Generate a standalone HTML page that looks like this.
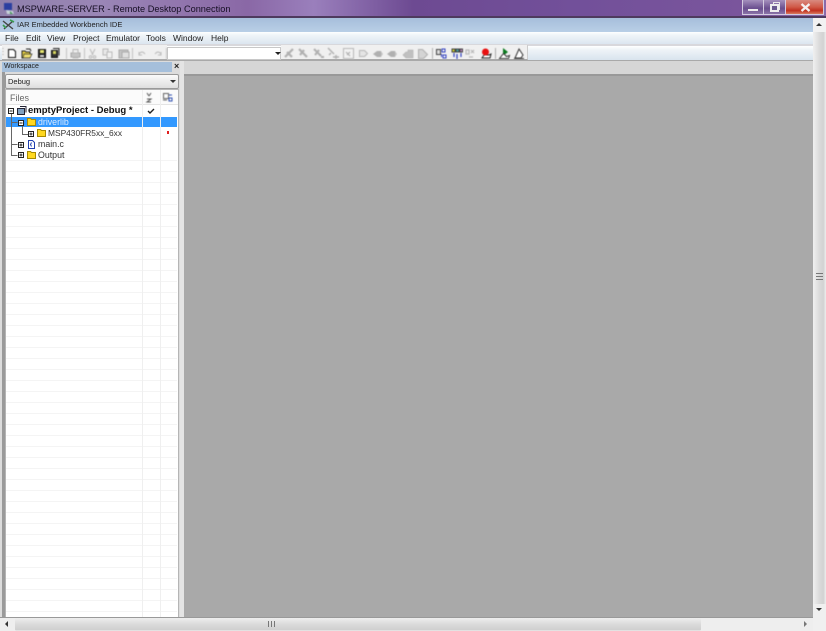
<!DOCTYPE html>
<html><head><meta charset="utf-8"><style>
html,body{margin:0;padding:0;width:826px;height:631px;overflow:hidden;background:#fff}
body{position:relative;font-family:"Liberation Sans",sans-serif}
div,span,svg{position:absolute;box-sizing:border-box}
.t{white-space:nowrap;color:#222;filter:blur(.35px)}
.m{top:33px;font-size:8.5px;line-height:11px;color:#222;white-space:nowrap;filter:blur(.35px)}
.r{left:6px;width:171px;height:1px;background:#f4f4f4}
</style></head><body>
<!-- title bar -->
<div style="left:0;top:0;width:826px;height:17px;background:linear-gradient(90deg,#8f80ab 0,#9a86b6 12%,#8a68a6 30%,#9a7fbc 38%,#6d4a92 50%,#72509a 70%,#7a559c 90%,#8a6aa8 100%)"></div>
<div style="left:0;top:16px;width:826px;height:2px;background:#4e3a5e"></div>
<svg style="left:3px;top:2px;filter:blur(.4px)" width="12" height="13" viewBox="0 0 12 13"><path d="M1 1h8v7H1z" fill="#2b3fa0"/><path d="M3 8l7 1 1 3H4z" fill="#c6d0d8"/><path d="M7 9l3 3H7z" fill="#4a9a5a"/></svg>
<div class="t" style="left:17px;top:3px;font-size:9.2px;line-height:12px;color:#160f24">MSPWARE-SERVER - Remote Desktop Connection</div>
<!-- window buttons -->
<div style="left:742px;top:0;width:22px;height:15px;border:1px solid #d4cbe0;border-top:0;background:linear-gradient(#a490bd,#6a4e8e 60%,#8a74a8)"></div>
<div style="left:764px;top:0;width:22px;height:15px;border:1px solid #d4cbe0;border-top:0;border-left:0;background:linear-gradient(#a490bd,#6a4e8e 60%,#8a74a8)"></div>
<div style="left:786px;top:0;width:38px;height:15px;border:1px solid #d4cbe0;border-top:0;border-left:0;background:linear-gradient(#d98a80,#d05a48 50%,#c03020 75%,#d87a60)"></div>
<div style="left:748px;top:9px;width:10px;height:2px;background:#eee"></div>
<div style="left:773px;top:2px;width:7px;height:8px;border:1px solid #e8e8e8"></div>
<div style="left:770px;top:4px;width:9px;height:8px;border:2px solid #eee;background:#6a5a90"></div>
<svg style="left:800px;top:3px" width="11" height="9" viewBox="0 0 11 9"><path d="M1.500 1l8 7M9.500 1l-8 7" stroke="#f4f0f0" stroke-width="2.400"/></svg>
<!-- IDE title -->
<div style="left:0;top:18px;width:813px;height:14px;background:linear-gradient(#a6bedb,#b9cfe6)"></div>
<svg style="left:2px;top:19px;filter:blur(.3px)" width="13" height="12" viewBox="0 0 13 12"><path d="M1 2l10 8M2 10l9-8" stroke="#444" stroke-width="1.400"/><path d="M8 1l4 2M1 6l3 3" stroke="#3a9a50" stroke-width="1.600"/></svg>
<div class="t" style="left:17px;top:19px;font-size:7.5px;line-height:12px">IAR Embedded Workbench IDE</div>
<!-- menu -->
<div style="left:0;top:32px;width:813px;height:13px;background:linear-gradient(#fff 0,#f0f5f9 3px,#d9e4ee 100%)"></div>
<div class="m" style="left:5px">File</div>
<div class="m" style="left:26px">Edit</div>
<div class="m" style="left:47px">View</div>
<div class="m" style="left:73px">Project</div>
<div class="m" style="left:106px">Emulator</div>
<div class="m" style="left:146px">Tools</div>
<div class="m" style="left:173px">Window</div>
<div class="m" style="left:211px">Help</div>
<!-- toolbar band -->
<div style="left:0;top:44px;width:813px;height:2px;background:#d8d8dc"></div>
<div style="left:0;top:46px;width:813px;height:14px;background:linear-gradient(#fff,#eef3f7 4px,#d9e4ee)"></div>
<div style="left:0;top:60px;width:813px;height:1px;background:#a9a9a9"></div>
<div style="left:2px;top:45px;width:165px;height:15px;background:#f0f0f0;border-bottom:1px solid #aaa"></div>
<div style="left:167px;top:47px;width:114px;height:13px;background:#fff;border:1px solid #c8c8c8"></div>
<div style="left:275px;top:52px;width:0;height:0;border:3px solid transparent;border-top:3px solid #222"></div>
<div style="left:281px;top:45px;width:247px;height:15px;background:#f0f0f0;border-bottom:1px solid #aaa;border-right:1px solid #ccc"></div>
<!-- toolbar icons left -->
<svg style="left:0;top:45px;filter:blur(.4px)" width="170" height="15" viewBox="0 0 170 15" fill="none">
<path d="M3 3v1M3 6v1M3 9v1" stroke="#aaa"/>
<path d="M8.500 4.500h5l2 2v6h-7z" fill="#fff" stroke="#111"/>
<path d="M22 6h3l1 1h4v6h-8z" fill="#e8d040" stroke="#222"/><path d="M26 4h4l1 2" stroke="#222"/><path d="M24 9h8l-2 4h-7z" fill="#f0e070" stroke="#333" stroke-width=".7"/>
<path d="M38.500 4.500h7v8h-7z" fill="#222" stroke="#111"/><path d="M40 5h4v3h-4z" fill="#e8e870"/><path d="M40 10h4v2h-4z" fill="#ddd"/>
<path d="M53 3.500h6v7" stroke="#222"/><path d="M51.500 5.500h6v7h-6z" fill="#333" stroke="#111"/><path d="M53 6h3v3h-3z" fill="#d8d860"/>
<path d="M66.500 3v11" stroke="#c4c4c4"/>
<path d="M71 8h9v4h-9z" fill="#c4c4c4" stroke="#aaa"/><path d="M73 4.500h5V8h-5zM73 12h5v1h-5z" fill="#eee" stroke="#b8b8b8"/>
<path d="M84.500 3v11" stroke="#c4c4c4"/>
<path d="M90 4l3 6M95 4l-3 6" stroke="#bbb"/><circle cx="90.500" cy="12" r="1.300" stroke="#bbb"/><circle cx="94.500" cy="12" r="1.300" stroke="#bbb"/>
<path d="M103 4h5v6h-5z" fill="#e8e8e8" stroke="#bbb"/><path d="M107 7h5v6h-5z" fill="#f0f0f0" stroke="#bbb"/>
<path d="M119 5h9v8h-9z" fill="#c4c4c4" stroke="#aaa"/><path d="M122 7h7v6h-7z" fill="#e0e0e0" stroke="#aaa"/>
<path d="M132.500 3v11" stroke="#c4c4c4"/>
<path d="M139 9q3-4 6 0M139 7v3h3" stroke="#bbb"/><path d="M161 9q-3-4-6 0M161 7v3h-3" stroke="#bbb"/>
<path d="M166.500 3v11" stroke="#c4c4c4"/>
</svg>
<!-- toolbar icons right -->
<svg style="left:281px;top:45px;filter:blur(.4px)" width="247" height="15" viewBox="0 0 247 15" fill="none">
<path d="M4 12l8-8M6 7l5 5" stroke="#b0b0b0" stroke-width="2.200"/>
<path d="M18 4l8 8M23 5l-4 5" stroke="#b0b0b0" stroke-width="2.200"/>
<path d="M33 4l7 7M38 5l-4 5M40 12h3" stroke="#b0b0b0" stroke-width="2"/>
<path d="M47 3l6 6M50 8l-2 2M52 12h6M55 10v4" stroke="#b0b0b0" stroke-width="1.400"/>
<path d="M62.500 3.500h10v10h-10z" fill="#f2f2f2" stroke="#b8b8b8"/><path d="M65 7l4 4M69 7l-3 3" stroke="#b0b0b0" stroke-width="1.200"/>
<path d="M78.500 5.500h5l3 3-3 3h-5z" fill="#e4e4e4" stroke="#b8b8b8"/>
<path d="M92 9l4-3h4v6h-4z" fill="#b0b0b0"/><path d="M102 9l-2-3v6z" fill="#c4c4c4"/>
<path d="M106 9l4-3h4v6h-4z" fill="#b0b0b0"/><path d="M116 9l-2-3v6z" fill="#c4c4c4"/>
<path d="M122 10l3-3h2v-2h5v8h-7z" fill="#c0c0c0" stroke="#b0b0b0" stroke-width=".6"/>
<path d="M137.500 4.500h4l2 2 3 3-4 4h-5z" fill="#d4d4d4" stroke="#b0b0b0"/>
<path d="M151.500 3v11" stroke="#b0b0b0"/>
<path d="M155.500 4.500h4v5h-4z" fill="#ddd" stroke="#444"/><path d="M161 4h3v3h-3zM162 10h3v3h-3z" stroke="#3040c0"/><path d="M160.500 9v3" stroke="#3040c0"/>
<path d="M171 4h3v3h-3z" fill="#d0d020" stroke="#444"/><path d="M175 4h3v3h-3z" fill="#40a0a0" stroke="#444"/><path d="M179 4h2.500v3H179z" fill="#c080c0" stroke="#444"/><path d="M173 8v4M176 9v5M180 8v4" stroke="#3040c0" stroke-width="1.200"/>
<path d="M185 5h3v4h-3zM190 5l3 3M193 5l-3 3M188 12h4" stroke="#b8b8b8" stroke-width="1.200"/>
<path d="M201 13l2-3h5l2-1-1 4h-8z" fill="#fff" stroke="#222"/><circle cx="204.500" cy="7" r="3.500" fill="#e81010"/>
<path d="M214.500 3v11" stroke="#aaa"/>
<path d="M222 3l5 4-5 4z" fill="#0c7a20"/><path d="M218.500 13.500l4-5 3 3 3-1-1 3z" fill="#fff" stroke="#333"/>
<path d="M238 4l4 6-2 3h-6z" fill="#fff" stroke="#333"/><path d="M233 13.500h10" stroke="#333"/>
</svg>
<!-- client area background -->
<div style="left:0;top:61px;width:813px;height:556px;background:#d6d6d6"></div>
<div style="left:184px;top:74px;width:629px;height:2px;background:#999"></div>
<div style="left:184px;top:76px;width:629px;height:541px;background:#a9a9a9"></div>
<div style="left:180px;top:61px;width:4px;height:556px;background:#e4e4e4"></div>
<!-- workspace -->
<div style="left:0;top:61px;width:180px;height:556px;background:#dcdcdc"></div>
<div style="left:2px;top:62px;width:170px;height:10px;background:#a5bfdb"></div>
<div class="t" style="left:4px;top:62px;font-size:7px;line-height:10px">Workspace</div>
<div class="t" style="left:174px;top:61px;font-size:9px;line-height:11px;font-weight:bold">×</div>
<div style="left:2px;top:72px;width:3px;height:545px;background:#9a9a9a"></div>
<div style="left:5px;top:74px;width:174px;height:15px;background:linear-gradient(#fafafa,#dedede);border:1px solid #999;border-radius:2px"></div>
<div class="t" style="left:8px;top:76px;font-size:7.500px;line-height:11px">Debug</div>
<div style="left:170px;top:80px;width:0;height:0;border:3px solid transparent;border-top:3px solid #333"></div>
<div style="left:5px;top:89px;width:174px;height:528px;background:#fff;border:1px solid #b5b5b5;border-bottom:0"></div>
<div style="left:6px;top:90px;width:172px;height:15px;background:#fbfbfb;border-bottom:1px solid #e4e4e4"></div>
<div class="t" style="left:10px;top:92px;font-size:9px;line-height:12px;color:#666">Files</div>
<!-- row lines -->
<div class="r" style="top:160px"></div><div class="r" style="top:171px"></div><div class="r" style="top:182px"></div><div class="r" style="top:193px"></div><div class="r" style="top:204px"></div><div class="r" style="top:215px"></div><div class="r" style="top:226px"></div><div class="r" style="top:237px"></div><div class="r" style="top:248px"></div><div class="r" style="top:259px"></div><div class="r" style="top:270px"></div><div class="r" style="top:281px"></div><div class="r" style="top:292px"></div><div class="r" style="top:303px"></div><div class="r" style="top:314px"></div><div class="r" style="top:325px"></div><div class="r" style="top:336px"></div><div class="r" style="top:347px"></div><div class="r" style="top:358px"></div><div class="r" style="top:369px"></div><div class="r" style="top:380px"></div><div class="r" style="top:391px"></div><div class="r" style="top:402px"></div><div class="r" style="top:413px"></div><div class="r" style="top:424px"></div><div class="r" style="top:435px"></div><div class="r" style="top:446px"></div><div class="r" style="top:457px"></div><div class="r" style="top:468px"></div><div class="r" style="top:479px"></div><div class="r" style="top:490px"></div><div class="r" style="top:501px"></div><div class="r" style="top:512px"></div><div class="r" style="top:523px"></div><div class="r" style="top:534px"></div><div class="r" style="top:545px"></div><div class="r" style="top:556px"></div><div class="r" style="top:567px"></div><div class="r" style="top:578px"></div><div class="r" style="top:589px"></div><div class="r" style="top:600px"></div><div class="r" style="top:611px"></div>
<!-- selected -->
<div style="left:6px;top:117px;width:171px;height:10px;background:#3399ff"></div>
<!-- column lines -->
<div style="left:142px;top:90px;width:1px;height:527px;background:#efefef"></div>
<div style="left:160px;top:90px;width:1px;height:527px;background:#efefef"></div>
<!-- column header icons -->
<svg style="left:145px;top:92px;filter:blur(.4px)" width="30" height="11" viewBox="0 0 30 11" fill="none">
<path d="M2 1l2 3M6 1l-2 3M2 7h4l-4 3h4" stroke="#555"/><path d="M18.500 1.500h5v5h-5z" stroke="#666"/><path d="M24 3h3M24 6h3v3h-3z" stroke="#3050b0"/><path d="M18 8h4" stroke="#666"/>
</svg>
<!-- tree lines -->
<svg style="left:6px;top:105px;filter:blur(.35px)" width="60" height="56" viewBox="0 0 60 56" fill="none">
<path d="M5.500 9v41.500h6M5.500 17.500h6M5.500 39.500h6M16.500 21v8.500h6" stroke="#666"/>
<rect x="2.500" y="3.500" width="5" height="5" fill="#fff" stroke="#222"/><path d="M3.500 6h3" stroke="#222"/>
<rect x="12.500" y="15.500" width="5" height="5" fill="#fff" stroke="#222"/><path d="M13.500 18h3" stroke="#222"/>
<rect x="22.500" y="26.500" width="5" height="5" fill="#fff" stroke="#222"/><path d="M23.500 29h3M25 27.500v3" stroke="#222"/>
<rect x="12.500" y="37.500" width="5" height="5" fill="#fff" stroke="#222"/><path d="M13.500 40h3M15 38.500v3" stroke="#222"/>
<rect x="12.500" y="47.500" width="5" height="5" fill="#fff" stroke="#222"/><path d="M13.500 50h3M15 48.500v3" stroke="#222"/>
<path d="M11.500 3.500h7v6h-7z" fill="#7fa0c0" stroke="#223"/><path d="M14 1.500h6v6" stroke="#223"/>
<path d="M21.500 13.500h3l1 1h4v6h-8z" fill="#ffd820" stroke="#a88a00"/>
<path d="M31.500 24.500h3l1 1h4v6h-8z" fill="#ffd820" stroke="#a88a00"/>
<path d="M22.500 35.500h4l2 2v6h-6z" fill="#fff" stroke="#2040b0"/><path d="M25.500 37.500l-1 2 1 2" stroke="#2040b0"/>
<path d="M21.500 46.500h3l1 1h4v6h-8z" fill="#ffd820" stroke="#a88a00"/>
</svg>
<div class="t" style="left:28px;top:105px;font-size:9.5px;line-height:12px;font-weight:bold;color:#111">emptyProject - Debug *</div>
<div class="t" style="left:38px;top:116px;font-size:8.800px;line-height:12px;color:#dbeaff">driverlib</div>
<div class="t" style="left:48px;top:127px;font-size:8.400px;line-height:12px;color:#333">MSP430FR5xx_6xx</div>
<div class="t" style="left:38px;top:138px;font-size:8.800px;line-height:12px;color:#333">main.c</div>
<div class="t" style="left:38px;top:149px;font-size:8.800px;line-height:12px;color:#333">Output</div>
<svg style="left:147px;top:107px" width="8" height="7" viewBox="0 0 8 7"><path d="M1 4l2 2 4-4" fill="none" stroke="#222" stroke-width="1.400"/></svg>
<div style="left:167px;top:131px;width:2px;height:3px;background:#e02020"></div>
<!-- vertical scrollbar -->
<div style="left:813px;top:18px;width:13px;height:599px;background:linear-gradient(90deg,#f0f0f0,#dcdcdc 45%,#d2d2d2 80%,#eee)"></div>
<div style="left:813px;top:18px;width:13px;height:14px;background:#f2f2f2"></div>
<div style="left:816px;top:20px;width:0;height:0;border:3px solid transparent;border-bottom:3px solid #333"></div>
<div style="left:816px;top:273px;width:7px;height:1px;background:#777"></div>
<div style="left:816px;top:276px;width:7px;height:1px;background:#777"></div>
<div style="left:816px;top:279px;width:7px;height:1px;background:#777"></div>
<div style="left:813px;top:604px;width:13px;height:27px;background:#f0f0f0"></div>
<div style="left:816px;top:608px;width:0;height:0;border:3px solid transparent;border-top:3px solid #333"></div>
<!-- horizontal scrollbar -->
<div style="left:0;top:617px;width:813px;height:14px;background:#eeeeee;border-top:1px solid #999"></div>
<div style="left:15px;top:618px;width:686px;height:13px;background:linear-gradient(#eee,#dadada 50%,#cfcfcf 90%,#eee);border-radius:2px"></div>
<div style="left:2px;top:621px;width:0;height:0;border:3px solid transparent;border-right:3px solid #333"></div>
<div style="left:804px;top:621px;width:0;height:0;border:3px solid transparent;border-left:3px solid #777"></div>
<div style="left:268px;top:621px;width:1px;height:6px;background:#777"></div>
<div style="left:271px;top:621px;width:1px;height:6px;background:#777"></div>
<div style="left:274px;top:621px;width:1px;height:6px;background:#777"></div>
</body></html>
